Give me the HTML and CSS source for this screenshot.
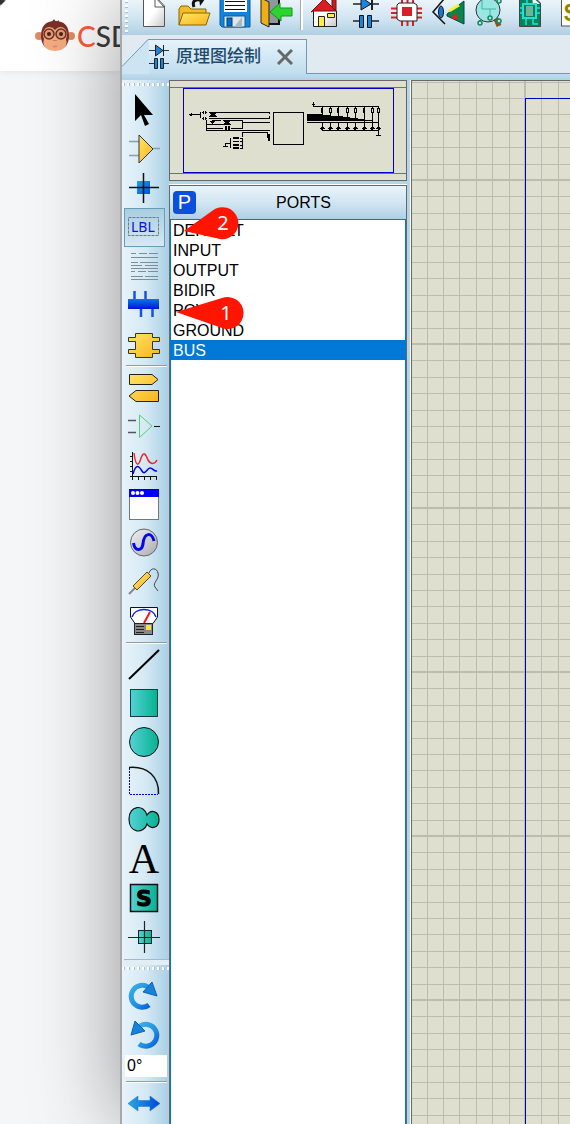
FILE: index.html
```html
<!DOCTYPE html>
<html lang="zh-CN">
<head>
<meta charset="utf-8">
<title>原理图绘制</title>
<link rel="stylesheet" href="styles.css">
</head>
<body>
<svg class="defs" width="0" height="0" aria-hidden="true">
  <defs>
    <linearGradient id="gold" x1="0" y1="0" x2="1" y2="1"><stop offset="0" stop-color="#ffe566"/><stop offset="1" stop-color="#f9b41c"/></linearGradient>
    <linearGradient id="teal" x1="0" y1="0" x2="1" y2="0"><stop offset="0" stop-color="#55d2d4"/><stop offset="1" stop-color="#06b191"/></linearGradient>
    <linearGradient id="blue" x1="0" y1="0" x2="1" y2="1"><stop offset="0" stop-color="#22a0e6"/><stop offset="1" stop-color="#0050e0"/></linearGradient>
    <linearGradient id="sweep" x1="0" y1="0" x2="1" y2="0"><stop offset="0" stop-color="#29abe2"/><stop offset="1" stop-color="#0046dc"/></linearGradient>
    <linearGradient id="turn" x1="0" y1="0" x2="1" y2="1"><stop offset="0" stop-color="#3aaee8"/><stop offset="0.6" stop-color="#2090e0"/><stop offset="1" stop-color="#0a5cdc"/></linearGradient>
    <linearGradient id="silver" x1="0" y1="0" x2="1" y2="1"><stop offset="0" stop-color="#f2f2f4"/><stop offset="1" stop-color="#a9a9b0"/></linearGradient>
    <linearGradient id="paper" x1="0" y1="0" x2="1" y2="1"><stop offset="0.5" stop-color="#fff"/><stop offset="1" stop-color="#c8c8c8"/></linearGradient>
    <linearGradient id="bus" x1="0" y1="0" x2="0" y2="1"><stop offset="0" stop-color="#0a78e6"/><stop offset="1" stop-color="#0014dc"/></linearGradient>
  </defs>
</svg>
<div class="desktop">
  <aside class="site">
    <header class="site-bar">
      <svg class="monkey" viewBox="0 0 40 34" aria-hidden="true">
        <circle cx="4" cy="17" r="4" fill="#e08a68"/><circle cx="36" cy="17" r="4" fill="#e08a68"/>
        <path d="M16 4L19 0L21 3L24 1L23 5Z" fill="#7c2f28"/>
        <path d="M6 17Q6 2 20 2Q34 2 34 17Q34 24 30 28H10Q6 24 6 17Z" fill="#7c2f28"/>
        <path d="M20 11Q16 6 11 9Q6 13 9 20Q6 31 20 32Q34 31 31 20Q34 13 29 9Q24 6 20 11Z" fill="#f3ad80"/>
        <circle cx="14" cy="15" r="5" fill="#e39a72" stroke="#6b3129" stroke-width="1.500"/>
        <circle cx="26" cy="15" r="5" fill="#e39a72" stroke="#6b3129" stroke-width="1.500"/>
        <circle cx="14" cy="15" r="2" fill="#4a1f1c"/><circle cx="26" cy="15" r="2" fill="#4a1f1c"/>
        <path d="M19 21V22M21 21V22" stroke="#a65543" stroke-width="1"/>
        <path d="M17 27Q20 26 23 27Q20 30 17 27Z" fill="#f28080"/>
      </svg>
      <span class="brand"><b>C</b>SDN</span>
    </header>
  </aside>

  <main class="app">
    <nav class="toolbar" aria-label="File">
      <span class="grip-v"></span>
      <button class="cmd" aria-label="New"><svg viewBox="0 0 41 35"><path d="M10.500 -3V26.500H31.500V6L23 -3Z" fill="url(#paper)" stroke="#555"/><path d="M22 -3V7H31Z" fill="#fff" stroke="#555"/></svg></button>
      <button class="cmd" aria-label="Open"><svg viewBox="0 0 41 35"><path d="M5 25V9L7 6H14L17 9H32V13" fill="#f3bd22" stroke="#8a6508"/><path d="M5 25L9 13H36L32 25Z" fill="url(#gold)" stroke="#8a6508"/><path d="M20 7C17 -1 24 -1 29 1" fill="none" stroke="#111" stroke-width="3"/><path d="M25 -3L31 -1L26 6Z" fill="#111"/></svg></button>
      <button class="cmd" aria-label="Save"><svg viewBox="0 0 41 35"><path d="M5 -2H35V27H7L5 25Z" fill="#1583d8" stroke="#075da8"/><rect x="9" y="-2" width="23" height="14" fill="#fff"/><path d="M10 1.500H30M10 5.500H30M10 9.500H30" stroke="#111"/><rect x="9" y="16" width="21" height="11" fill="#dce6ec" stroke="#075da8"/><rect x="12" y="18" width="5" height="8" fill="#0868dd" stroke="#044"/><path d="M19 27L27 17V27Z" fill="#a9b8c0"/></svg></button>
      <button class="cmd" aria-label="Exit"><svg viewBox="0 0 41 35"><path d="M5 -2H23V24H13" fill="#8e989c" stroke="#111" stroke-width="2"/><path d="M5 -2L13 2V27L5 23Z" fill="#efae16" stroke="#222"/><path d="M14 12L24 3V8H36V16H25V21Z" fill="#2bd52d" stroke="#14951a"/></svg></button>
      <span class="bar-sep"></span>
      <button class="cmd" aria-label="Home"><svg viewBox="0 0 41 35"><rect x="28" y="-1" width="4" height="12" fill="#c91e1e" stroke="#611"/><path d="M9.500 11L20 1L32.500 11V26.500H9.500Z" fill="url(#paper)" stroke="#222"/><path d="M7 12L20 -1L32 11H9Z" fill="#dd1c20" stroke="#711"/><path d="M14.500 26V16.500H20.500V26M23.500 13.500H30.500V17.500H23.500Z" fill="#ffed4a" stroke="#222"/></svg></button>
      <button class="cmd" aria-label="Schematic"><svg viewBox="0 0 41 35"><path d="M8 4H34M8 21H15M27 21H34" stroke="#222" stroke-width="1.500"/><path d="M16 -3V10L26 4L16 -3Z" fill="#1686de" stroke="#111"/><path d="M27 -2V10" stroke="#222" stroke-width="2"/><path d="M14.500 15.500H18.500V27.500H14.500ZM22.500 15.500H26.500V27.500H22.500Z" fill="#1686de" stroke="#111"/></svg></button>
      <button class="cmd" aria-label="PCB layout"><svg viewBox="0 0 41 35"><path d="M5 8.500H36M5 13H36M5 17.500H36M16 -3V26M21.500 -3V26M27 -3V26" stroke="#d82127" stroke-width="2"/><path d="M13 3H28L31 5V21H14L11 19V5Z" fill="#fff" stroke="#222"/><rect x="16" y="7" width="10" height="9" fill="#d82127"/></svg></button>
      <button class="cmd" aria-label="3D viewer"><svg viewBox="0 0 41 35"><path d="M17 -1L6 12L18 24" fill="none" stroke="#111" stroke-width="1.500"/><ellipse cx="14" cy="12" rx="2.500" ry="6" fill="#137cd8" stroke="#111"/><path d="M20 14L37 1V24L20 16Z" fill="#09854a" stroke="#045"/><path d="M22 11L32 5" stroke="#ffee35" stroke-width="3"/><path d="M24 18L29 13L31 20Z" fill="#f11b1b"/></svg></button>
      <button class="cmd" aria-label="Design explorer"><svg viewBox="0 0 41 35"><path d="M12 20V23M29 18L31 20" stroke="#178760" stroke-width="2"/><path d="M28 19L31 26" stroke="#8b511b" stroke-width="5"/><circle cx="20" cy="10" r="12" fill="#99e6e5" stroke="#333"/><path d="M14 -1V9H28M22 9V18" fill="none" stroke="#3cb8a0"/><g fill="#b3ebdd" stroke="#178760" stroke-width="1.500"><circle cx="12" cy="23" r="2"/><circle cx="31" cy="21" r="2"/><circle cx="31" cy="1" r="2"/><circle cx="22" cy="18" r="2"/></g></svg></button>
      <button class="cmd" aria-label="Gerber viewer"><svg viewBox="0 0 41 35"><path d="M10.500 -3V26.500H31.500V3L25 -3Z" fill="#078259" stroke="#444"/><path d="M23 -3L31 4H24Z" fill="#fff"/><path d="M11 8H31M11 13H31M18 -2V4M24 18V24H29M17 18V25" fill="none" stroke="#20dfd7" stroke-width="1.500"/><rect x="14" y="4" width="13" height="14" fill="#078259" stroke="#20dfd7" stroke-width="2"/><rect x="17" y="6" width="7" height="10" fill="#70b39d"/></svg></button>
      <button class="cmd" aria-label="Bill of materials"><svg viewBox="0 0 41 35"><rect x="11.500" y="-3" width="22" height="29" fill="#fff" stroke="#555"/><text class="dollar" x="14" y="21">$</text></svg></button>
    </nav>

    <div class="tabs">
      <div class="tab">
        <svg class="tab-edge" viewBox="0 0 27 39" aria-hidden="true"><path d="M0 31.500L26 4.500H27V39H0Z" fill="#cde5f3"/><path d="M0 31.500L26 4.500H27" fill="none" stroke="#6a9cb8"/></svg>
        <div class="tab-body">
          <svg class="tab-icon" viewBox="0 0 20 26" aria-hidden="true"><path d="M0 6.500H20M0 19.500H6M14 19.500H20" stroke="#333" stroke-width="1"/><path d="M6.500 1V12L14 6.500Z" fill="#1686de" stroke="#222"/><path d="M14.500 1V12" stroke="#222"/><path d="M5.500 14.500H8.500V24.500H5.500ZM11.500 14.500H14.500V24.500H11.500Z" fill="#1686de" stroke="#222"/></svg>
          <span class="tab-title">原理图绘制</span>
          <button class="close" aria-label="Close"><svg viewBox="0 0 16 16"><path d="M1 1L15 15M15 1L1 15" stroke="#686868" stroke-width="3"/></svg></button>
        </div>
      </div>
      <div class="tab-rest"></div>
    </div>

    <div class="work">
      <nav class="tools" aria-label="Modes">
        <span class="grip"></span>
        <div class="group">
          <button class="tool" aria-label="Selection"><svg viewBox="0 0 40 39"><path d="M11 3V30L17 24L21 35L25 33L20 24H29Z" fill="#000"/></svg></button>
          <button class="tool" aria-label="Component"><svg viewBox="0 0 40 39"><path d="M5 11.500H15M5 25.500H15M29 18.500H36" stroke="#8c9dab" stroke-width="1.500"/><path d="M15 5V33L29 19Z" fill="url(#gold)" stroke="#333"/></svg></button>
          <button class="tool" aria-label="Junction"><svg viewBox="0 0 40 39"><rect x="13" y="12" width="13" height="13" fill="url(#blue)"/><path d="M19.500 4V34M5 18.500H35" stroke="#111" stroke-width="1.500"/></svg></button>
          <button class="tool active" aria-label="Wire label"><svg viewBox="0 0 40 39"><rect x="4.500" y="9.500" width="30" height="18" fill="none" stroke="#777" stroke-dasharray="3 1"/><text class="lbl" x="7" y="24">LBL</text></svg></button>
          <button class="tool" aria-label="Text script"><svg viewBox="0 0 40 39"><path d="M7 6.500H12M15 6.500H23M25 6.500H34M7 10.500H34M7 15.500H14M16 15.500H34M7 18.500H18M21 18.500H34M7 21.500H34M7 24.500H11M14 24.500H22M24 24.500H34M7 29.500H19M21 29.500H34M7 32.500H34" stroke="#7e8d96"/></svg></button>
          <button class="tool" aria-label="Bus"><svg viewBox="0 0 40 39"><path d="M10.500 5V14M21.500 5V14M17 22V31M28.500 22V31" stroke="#1453e0" stroke-width="2.500"/><rect x="4" y="13" width="31" height="10" fill="url(#bus)"/></svg></button>
          <button class="tool" aria-label="Subcircuit"><svg viewBox="0 0 40 39"><path d="M11.500 8.500H28.500V12.500H35.500V16.500H28.500V24.500H35.500V28.500H28.500V32.500H11.500V28.500H4.500V24.500H11.500V16.500H4.500V12.500H11.500Z" fill="url(#gold)" stroke="#333"/></svg></button>
        </div>
        <hr class="rule">
        <div class="group">
          <button class="tool" aria-label="Terminals"><svg viewBox="0 0 40 39"><path d="M5.500 6.500H28L34 11.500L28 16.500H5.500ZM34.500 22.500H12L5 28L12 33.500H34.500Z" fill="url(#gold)" stroke="#222"/></svg></button>
          <button class="tool" aria-label="Device pins"><svg viewBox="0 0 40 39"><path d="M4 13.500H12M4 25.500H12" stroke="#555" stroke-width="1.500"/><path d="M30 19.500H36" stroke="#111"/><path d="M15.500 8V30.500L28 19Z" fill="none" stroke="#59cd74"/></svg></button>
          <button class="tool" aria-label="Graph"><svg viewBox="0 0 40 39"><path d="M8.500 6V30.500H33M6 10.500H9M6 15.500H9M6 20.500H9M6 25.500H9M6 30.500H9M14.500 30V34M20.500 30V34M26.500 30V34M32.500 30V34M8.500 30V34" fill="none" stroke="#111"/><path d="M10 7C12 23 15 19 17 12C20 4 22 9 24 14C27 19 31 18 33 14" fill="none" stroke="#f0262b" stroke-width="1.500"/><path d="M9 28C12 17 15 20 18 25C21 30 23 22 26 22C29 22 30 26 33 25" fill="none" stroke="#0000f5" stroke-width="1.500"/></svg></button>
          <button class="tool" aria-label="Active popup"><svg viewBox="0 0 40 39"><rect x="5.500" y="4.500" width="29" height="30" fill="#fff" stroke="#777"/><rect x="5" y="4" width="30" height="8" fill="#00f"/><path d="M5 4.500H35" stroke="#009"/><g fill="#fff"><circle cx="9" cy="8" r="2"/><circle cx="13.500" cy="8" r="2"/><circle cx="18" cy="8" r="2"/></g></svg></button>
          <button class="tool" aria-label="Generator"><svg viewBox="0 0 40 39"><circle cx="20" cy="18.500" r="13.500" fill="url(#silver)" stroke="#666"/><path d="M9.500 19C11 28 18 27 19 20C20 8 28 8 30 17" fill="none" stroke="#0008ef" stroke-width="3"/></svg></button>
          <button class="tool" aria-label="Probe"><svg viewBox="0 0 40 39"><path d="M5 31L11 25" stroke="#888" stroke-width="2"/><path d="M25 10C27 4 33 5 34 10C36 16 28 20 31 24L34 28" fill="none" stroke="#444"/><path d="M9 23L23 9L27 13L13 27Z" fill="url(#gold)" stroke="#543"/></svg></button>
          <button class="tool" aria-label="Instruments"><svg viewBox="0 0 40 39"><path d="M6.500 5.500H33.500V15L29 21.500H11L6.500 15Z" fill="#fff" stroke="#111"/><path d="M8 15C11 5 29 5 32 15" fill="none" stroke="#0527ed" stroke-width="1.500"/><path d="M20 21L26 10" stroke="#f01818" stroke-width="2"/><rect x="10.500" y="21.500" width="18" height="11" fill="#888" stroke="#222"/><path d="M12 24.500H20M12 27.500H20M12 30.500H20" stroke="#222"/><rect x="22" y="23" width="5" height="5" fill="#ffe62b"/></svg></button>
        </div>
        <hr class="rule">
        <div class="group">
          <button class="tool" aria-label="Line"><svg viewBox="0 0 40 39"><path d="M5 34L35 5" stroke="#000" stroke-width="2"/></svg></button>
          <button class="tool" aria-label="Box"><svg viewBox="0 0 40 39"><rect x="6.500" y="5.500" width="27" height="27" fill="url(#teal)" stroke="#143c3c"/></svg></button>
          <button class="tool" aria-label="Circle"><svg viewBox="0 0 40 39"><circle cx="20" cy="19" r="14.500" fill="url(#teal)" stroke="#111"/></svg></button>
          <button class="tool" aria-label="Arc"><svg viewBox="0 0 40 39"><path d="M5.500 6V32.500H34" fill="none" stroke="#00f" stroke-dasharray="2 1"/><path d="M5 5.500C24 4 35 15 34.500 32" fill="none" stroke="#111" stroke-width="1.500"/></svg></button>
          <button class="tool" aria-label="Path"><svg viewBox="0 0 40 39"><path d="M23 14C20 3 5 4 5 18C5 33 20 33 23 23C27 29 35 27 35 18.500C35 10 27 8 23 14Z" fill="url(#teal)" stroke="#111" stroke-width="1.200"/></svg></button>
          <button class="tool" aria-label="Text"><svg viewBox="0 0 40 39"><text class="big-a" x="20" y="33">A</text></svg></button>
          <button class="tool" aria-label="Symbol"><svg viewBox="0 0 40 39"><rect x="6.500" y="5.500" width="27" height="27" fill="url(#teal)" stroke="#111" stroke-width="1.500"/><text class="big-s" x="20" y="27">S</text></svg></button>
          <button class="tool" aria-label="Marker"><svg viewBox="0 0 40 39"><rect x="14.500" y="12.500" width="13" height="13" fill="url(#teal)" stroke="#122"/><path d="M20.500 3V35M4 19.500H36" stroke="#222" stroke-width="1.200"/></svg></button>
        </div>
        <div class="dock-edge"></div>
        <span class="grip low"></span>
        <div class="group">
          <button class="tool" aria-label="Rotate clockwise"><svg viewBox="0 0 40 39"><path d="M25 29A11 11 0 1 1 24 11" fill="none" stroke="url(#turn)" stroke-width="5"/><path d="M28 6L33 20L19 16Z" fill="#1682d8" stroke="#0a62b8"/></svg></button>
          <button class="tool" aria-label="Rotate anticlockwise"><svg viewBox="0 0 40 39"><path d="M15 29A11 11 0 1 0 16 11" fill="none" stroke="url(#turn)" stroke-width="5"/><path d="M11 6L7 20L21 16Z" fill="#1682d8" stroke="#0a62b8"/></svg></button>
        </div>
        <input class="angle" type="text" value="0°" aria-label="Rotation angle">
        <hr class="rule">
        <div class="group">
          <button class="tool" aria-label="Mirror"><svg viewBox="0 0 40 39"><path d="M4 19.500L14 12V16.500H26V12L36 19.500L26 27V22.500H14V27Z" fill="url(#sweep)" stroke="#1470c0" stroke-width="0.500"/></svg></button>
        </div>
      </nav>

      <section class="side">
        <div class="preview">
          <svg viewBox="15 18 708 297" shape-rendering="crispEdges" aria-label="Sheet overview">
            <path d="M15 37.500H723M15 295.500H723" stroke="#00c000" stroke-width="3"/>
            <rect x="55.500" y="40.500" width="630" height="252" fill="none" stroke="#0000c8" stroke-width="3"/>
            <g fill="none" stroke="#000" stroke-width="3">
              <rect x="325.500" y="112.500" width="90" height="96"/>
              <path d="M78 119.500H105M106.500 112V130M111 112.500H115M122 112.500H126M132 112.500H313V118M111 130.500H115M122 130.500H126M132 130.500H313V124M124.500 134V166H315M124 148.500H175M142 148V137H168M198 136.500H232V160H198M124 160.500H175M232 142.500H315M232.500 186V172H308V190M196.500 190V218M181 205.500H196M181.500 205V216M174 214.500H189M226 190.500H234M226 200.500H234M226 210.500H234M226 219.500H234M232.500 192V220"/>
              <path d="M445.500 82V94H641V184M442 88.500H450M472.500 94V118H426M496.500 94V121H426M520.500 94V127M547.500 94V130M571.500 94V133M598.500 94V136M622.500 94V136H598M426 142.500H641M472.500 142V166H641M496.500 142V166M520.500 142V166M547.500 142V166M571.500 142V166M598.500 136V166M622.500 136V166M634 181.500H648"/>
            </g>
            <path d="M72 119L81 113V125ZM113 107H117V117H113ZM120 107H124V117H120ZM113 126H117V135H113ZM120 126H124V135H120ZM132 112H156L150 119L156 126H132L138 119ZM136 139H150L143 148ZM174 136H198L192 143L198 150H174L180 143ZM180 153H185V166H180ZM189 153H194V166H189ZM204 186H222V193H204ZM204 197H222V202H204ZM204 207H222V212H204ZM204 215H222V221H204ZM305 178H315V190H305ZM309 190H315V198H309ZM426 123H520L547 126L571 130L598 132V137H426Z"/>
            <g fill="#dfdfd0" stroke="#000" stroke-width="3"><path d="M469 100H473V112H469ZM493 100H499V112H493ZM517 100H521V112H517ZM544 100H550V112H544ZM568 100H574V112H568ZM595 100H599V112H595ZM619 100H625V112H619ZM637 100H643V112H637Z"/></g>
            <path d="M463 160L472 155L482 160L472 165ZM487 160L496 155L506 160L496 165ZM511 160L520 155L530 160L520 165ZM538 160L547 155L557 160L547 165ZM562 160L571 155L581 160L571 165ZM589 160L598 155L608 160L598 165ZM613 160L622 155L632 160L622 165ZM632 160L641 155L650 160L641 165Z"/>
          </svg>
        </div>
        <div class="picker">
          <header class="picker-head">
            <button class="p-btn" aria-label="Pick">P</button>
            <h2 class="picker-title">PORTS</h2>
          </header>
          <ul class="ports">
            <li>DEFAULT</li>
            <li>INPUT</li>
            <li>OUTPUT</li>
            <li>BIDIR</li>
            <li>POWER</li>
            <li>GROUND</li>
            <li class="chosen">BUS</li>
          </ul>
          <svg class="callout second" viewBox="0 0 58 34"><path d="M0 25L28 5A16 16 0 1 1 36 33Z" fill="#ff1500"/><text x="39" y="24">2</text></svg>
          <svg class="callout first" viewBox="0 0 68 34"><path d="M0 16L46 2A16 16 0 1 1 46 32Z" fill="#ff1500"/><text x="50" y="24">1</text></svg>
        </div>
      </section>

      <section class="sheet" aria-label="Drawing sheet">
        <svg class="grid" width="100%" height="100%" shape-rendering="crispEdges">
          <defs>
            <pattern id="cells" x="113" y="99" width="164" height="164" patternUnits="userSpaceOnUse">
              <path d="M0.500 0V164M16.500 0V164M33.500 0V164M49.500 0V164M66.500 0V164M82.500 0V164M98.500 0V164M115.500 0V164M131.500 0V164M148.500 0V164M163.500 0V164M0 0.500H164M0 16.500H164M0 33.500H164M0 49.500H164M0 66.500H164M0 82.500H164M0 98.500H164M0 115.500H164M0 131.500H164M0 148.500H164M0 163.500H164" stroke="#bdbdae"/>
            </pattern>
          </defs>
          <rect width="100%" height="100%" fill="url(#cells)"/>
          <rect x="113.500" y="17.500" width="3000" height="3000" fill="none" stroke="#0000b0"/>
        </svg>
      </section>
    </div>
  </main>
</div>
</body>
</html>
```
FILE: styles.css
```css
* { box-sizing: border-box; }
body {
  margin: 0;
  height: 100vh;
  overflow: hidden;
  font-family: "Liberation Sans", "Noto Sans CJK SC", sans-serif;
  font-size: 16px;
  color: #000;
}
button { padding: 0; border: 0; background: none; display: block; flex: none; }
button svg { display: block; width: 100%; height: 100%; }
.defs { position: absolute; }
.desktop { display: flex; height: 100%; background: #f5f6f8; }

.site {
  flex: none;
  width: 120px;
  background: radial-gradient(circle at 0 0, #333 4px, transparent 6px), #f5f6f8;
}
.site-bar {
  display: flex;
  align-items: center;
  gap: 2px;
  height: 71px;
  padding-left: 35px;
  background: #fff;
  border-top-left-radius: 10px;
  box-shadow: 0 2px 6px rgba(0, 0, 0, 0.06);
}
.monkey { flex: none; width: 40px; height: 34px; }
.brand { font-family: Lato, sans-serif; font-size: 28px; line-height: 34px; font-weight: 500; color: #3c3c3c; }
.brand b { color: #ff5a36; font-weight: 500; }

.app {
  position: relative;
  flex: 1;
  min-width: 0;
  display: flex;
  flex-direction: column;
  border-left: 2px solid #a8a8a8;
  background: #b4d5e8;
  box-shadow: 0 0 80px rgba(0, 0, 0, 0.4);
}
.toolbar {
  display: flex;
  flex: none;
  height: 35px;
  overflow: hidden;
  background: linear-gradient(#eaf4fa, #cfe4f1 55%, #b0cfe1);
}
.grip-v { flex: none; width: 3px; margin: 0 5px 0 3px; background: repeating-linear-gradient(#fff 0 2px, #a9bfcd 2px 3px, transparent 3px 5px); }
.cmd { width: 41px; height: 35px; }
.bar-sep { flex: none; width: 7px; height: 30px; background: linear-gradient(90deg, transparent 3px, #aaa 3px 4px, #fff 4px 6px, transparent 6px); }
.dollar { font: bold 24px "Liberation Sans", sans-serif; fill: #8e8500; }

.tabs {
  display: flex;
  flex: none;
  height: 45px;
  background: linear-gradient(#e2eaf1 39px, #bfdcee 39px, #b0d2e6);
}
.tab { display: flex; flex: none; height: 39px; }
.tab-edge { width: 27px; height: 39px; }
.tab-body {
  display: flex;
  align-items: center;
  margin-top: 4px;
  padding-right: 13px;
  border-top: 1px solid #6a9cb8;
  border-right: 1px solid #6a9cb8;
  background: linear-gradient(#e6f3fa, #c0ddef);
}
.tab-icon { width: 20px; height: 26px; margin-right: 7px; }
.tab-title { font-size: 17px; line-height: 24px; font-weight: 500; color: #1f4a6b; }
.close { width: 16px; height: 16px; margin-left: 16px; }
.tab-rest { flex: 1; height: 39px; border-bottom: 1px solid #6a9cb8; }

.work { flex: 1; min-height: 0; display: flex; }
.tools {
  flex: none;
  width: 47px;
  overflow: hidden;
  background: linear-gradient(90deg, #e8f3fa, #d5e9f4 50%, #a9cfe5);
}
.grip { display: block; height: 3px; margin: 3px 0 5px; background: repeating-linear-gradient(90deg, #fff 0 2px, #a9bfcd 2px 3px, transparent 3px 5px); }
.group { padding-left: 2px; }
.tool { width: 41px; height: 39px; border: 1px solid transparent; }
.tool svg { width: 40px; height: 39px; margin: -1px; overflow: visible; }
.tool.active { border-color: #6a9cb8; background: linear-gradient(#a9cde1, #d5e9f4); }
.rule { height: 2px; margin: 1px 2px 1px 4px; border: 0; border-top: 1px solid #999; background: #fff; }
.lbl { font: 14px "Noto Sans", sans-serif; fill: #0a12e0; }
.big-a { font: 42px/1 "Liberation Serif", serif; text-anchor: middle; }
.big-s { font: bold 22px "DejaVu Sans", sans-serif; text-anchor: middle; stroke: #000; stroke-width: 1px; }
.dock-edge { height: 6px; margin: 2px 0 0 2px; border-top: 1px solid #9dbbd0; background: #e2edf5; }
.grip.low { margin: 2px 0 6px; }
.angle {
  display: block;
  width: 42px;
  height: 22px;
  margin: 1px 0 4px 3px;
  padding: 0 2px;
  border: 0;
  background: #fff;
  font: 16px "Liberation Sans", sans-serif;
}

.side { flex: none; width: 238px; display: flex; flex-direction: column; gap: 4px; }
.preview { flex: none; border: 1px solid #686868; background: #dfdfd0; }
.preview svg { display: block; width: 100%; }
.picker {
  position: relative;
  flex: 1;
  min-height: 0;
  display: flex;
  flex-direction: column;
  border: 1px solid #686868;
  border-bottom: 0;
  box-shadow: 0 -1px #fff;
}
.picker-head {
  display: flex;
  flex: none;
  align-items: center;
  height: 33px;
  padding: 0 3px;
  background: linear-gradient(#e9f4fb, #cfe4f1 55%, #aed0e3);
}
.p-btn { width: 23px; height: 23px; border-radius: 4px; background: #0a50dc; color: #fff; font: 20px/23px "Liberation Sans", sans-serif; }
.picker-title { flex: 1; margin: 0; padding-left: 8px; text-align: center; font-size: 16px; font-weight: 400; line-height: 20px; }
.ports {
  flex: 1;
  margin: 0;
  padding: 0;
  list-style: none;
  border: 1px solid #0078d7;
  border-bottom: 0;
  background: #fff;
}
.ports li { height: 20px; padding-left: 2px; line-height: 22px; }
.ports .chosen { background: #0078d7; color: #fff; }
.callout { position: absolute; height: 34px; }
.callout text { font: 20px "Noto Sans", sans-serif; fill: #fff; text-anchor: middle; }
.callout.second { left: 14px; top: 20px; width: 58px; }
.callout.first { left: 6px; top: 110px; width: 68px; }

.sheet {
  flex: 1;
  min-width: 0;
  margin-left: 4px;
  border-top: 1px solid #686868;
  border-left: 1px solid #686868;
  box-shadow: -1px 0 #fff;
  background: #dfdfd0;
}
.grid { display: block; }
```
